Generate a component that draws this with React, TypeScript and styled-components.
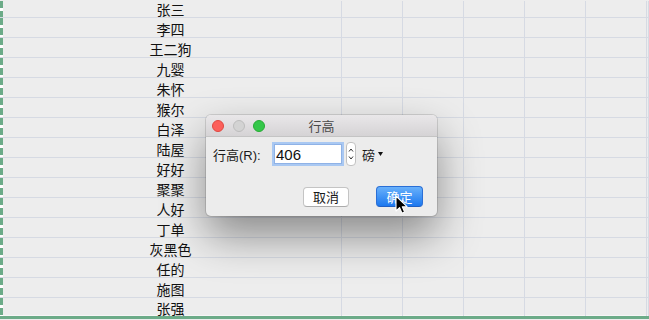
import React from 'react';
import styled, { createGlobalStyle } from 'styled-components';

const GlobalStyle = createGlobalStyle`
    html, body {
        margin: 0;
        padding: 0;
        background: #ededed;
        overflow: hidden;
    }
    body {
        font-family: "Liberation Sans", "Noto Sans CJK SC", sans-serif;
    }
`;

const Page = styled.div`
    position: relative;
    width: 649px;
    height: 320px;
    overflow: hidden;
    background: #ededed;
`;

const Sheet = styled.div`
    display: flex;
    flex-direction: column;
    padding-top: 1px;
`;

const Row = styled.div<{ $first?: boolean; $last?: boolean }>`
    display: grid;
    grid-template-columns: 342px repeat(5, 61px) 1fr;
    box-sizing: border-box;
    height: ${p => (p.$first ? 17 : p.$last ? 18 : 20)}px;
    border-bottom: 1px solid ${p => (p.$last ? '#f6f6f6' : '#d6dae3')};
`;

const NameCell = styled.div<{ $first?: boolean }>`
    box-sizing: border-box;
    display: flex;
    align-items: center;
    justify-content: center;
    padding-top: ${p => (p.$first ? 0 : 2)}px;
    border-right: 1px solid #d6dae3;
    background-image: repeating-linear-gradient(to bottom, #6cab88 0 7px, #ffffff 7px 10px);
    background-size: 3px 100%;
    background-repeat: no-repeat;
    font-family: "Noto Sans CJK SC", sans-serif;
    font-size: 14px;
    line-height: 16px;
    color: #111;
`;

const Cell = styled.div`
    box-sizing: border-box;
    border-right: 1px solid #d6dae3;
`;

const SelectionEdge = styled.div`
    height: 3px;
    background: #6cab88;
`;

const Dialog = styled.div`
    position: absolute;
    left: 206px;
    top: 115px;
    width: 231px;
    height: 101px;
    display: flex;
    flex-direction: column;
    background: #ececec;
    border-radius: 5px;
    box-shadow: 0 0 0 1px rgba(0, 0, 0, 0.12), 0 20px 44px rgba(0, 0, 0, 0.42);
    overflow: hidden;
`;

const TitleBar = styled.div`
    position: relative;
    height: 21px;
    display: flex;
    align-items: center;
    justify-content: center;
    background: linear-gradient(#e9e7e9, #d5d3d5);
    border-bottom: 1px solid #c4c4c4;
    font-size: 13px;
    color: #4a4a4a;
`;

const Lights = styled.div`
    position: absolute;
    left: 6px;
    top: 5px;
    display: flex;
    gap: 8.5px;
`;

const Light = styled.span<{ $fill: string; $edge: string }>`
    width: 12px;
    height: 12px;
    border-radius: 50%;
    box-sizing: border-box;
    background: ${p => p.$fill};
    border: 1px solid ${p => p.$edge};
`;

const Body = styled.div`
    display: flex;
    flex-direction: column;
    padding: 4px 14px 0 7px;
`;

const FieldRow = styled.div`
    display: flex;
    align-items: center;
    height: 26px;
`;

const Label = styled.label`
    width: 61px;
    font-size: 13px;
    color: #1a1a1a;
`;

const Input = styled.input`
    box-sizing: border-box;
    width: 68px;
    height: 20px;
    padding: 0 1px;
    border: 1px solid #8fb2e6;
    box-shadow: 0 0 0 2px #a9c8f2;
    outline: none;
    font-family: "Liberation Sans", sans-serif;
    font-size: 15px;
    color: #111;
    background: #fff;
`;

const Stepper = styled.div`
    box-sizing: border-box;
    margin-left: 4px;
    width: 10px;
    height: 24px;
    border: 1px solid #c2c2c2;
    border-radius: 4px;
    background: #fff;
    display: flex;
    align-items: center;
    justify-content: center;
`;

const Unit = styled.span`
    margin-left: 6px;
    font-size: 13px;
    color: #1a1a1a;
`;

const Caret = styled.svg`
    margin-left: 3px;
`;

const ButtonRow = styled.div`
    display: flex;
    justify-content: flex-end;
    align-items: center;
    gap: 27px;
    margin-top: 19px;
`;

const Button = styled.button<{ $primary?: boolean }>`
    box-sizing: border-box;
    width: ${p => (p.$primary ? 47 : 46)}px;
    height: ${p => (p.$primary ? 21 : 20)}px;
    padding: 0;
    border-radius: 4px;
    font-family: "Noto Sans CJK SC", sans-serif;
    font-size: 13px;
    line-height: 1;
    color: ${p => (p.$primary ? '#fff' : '#1a1a1a')};
    background: ${p => (p.$primary ? 'linear-gradient(#69b1fb, #1c78ef)' : '#fff')};
    border: 1px solid ${p => (p.$primary ? '#2a6fd6' : '#c4c4c4')};
    border-bottom-color: ${p => (p.$primary ? '#1f5fc4' : '#acacac')};
`;

const Cursor = styled.svg`
    position: absolute;
    left: 395px;
    top: 195px;
`;

const names = [
    '张三', '李四', '王二狗', '九婴', '朱怀', '猴尔', '白泽', '陆屋',
    '好好', '聚聚', '人好', '丁单', '灰黑色', '任的', '施图', '张强',
];

export default function App() {
    return (
        <Page>
            <GlobalStyle />
            <Sheet>
                {names.map((name, i) => (
                    <Row key={name} $first={i === 0} $last={i === names.length - 1}>
                        <NameCell $first={i === 0}>{name}</NameCell>
                        <Cell /><Cell /><Cell /><Cell /><Cell /><Cell />
                    </Row>
                ))}
                <SelectionEdge />
            </Sheet>

            <Dialog>
                <TitleBar>
                    <Lights>
                        <Light $fill="#fc605b" $edge="#de4841" />
                        <Light $fill="#d3d3d3" $edge="#bcbcbc" />
                        <Light $fill="#34c749" $edge="#27aa35" />
                    </Lights>
                    行高
                </TitleBar>
                <Body>
                    <FieldRow>
                        <Label htmlFor="rowHeight">行高(R):</Label>
                        <Input id="rowHeight" defaultValue="406" />
                        <Stepper>
                            <svg width="6" height="16" viewBox="0 0 6 16">
                                <path d="M1 5.5 L3 3 L5 5.5 M1 10.5 L3 13 L5 10.5" fill="none" stroke="#333" strokeWidth="1" />
                            </svg>
                        </Stepper>
                        <Unit>磅</Unit>
                        <Caret width="5" height="4" viewBox="0 0 5 4">
                            <path d="M0 0 H5 L2.5 4 Z" fill="#111" />
                        </Caret>
                    </FieldRow>
                    <ButtonRow>
                        <Button>取消</Button>
                        <Button $primary>确定</Button>
                    </ButtonRow>
                </Body>
            </Dialog>

            <Cursor width="13" height="20" viewBox="0 0 13 20">
                <path d="M1 1 L1 16 L4.6 12.6 L7 18.2 L9.6 17.1 L7.3 11.7 L12 11.7 Z" fill="#000" stroke="#fff" strokeWidth="1.1" strokeLinejoin="round" />
            </Cursor>
        </Page>
    );
}
